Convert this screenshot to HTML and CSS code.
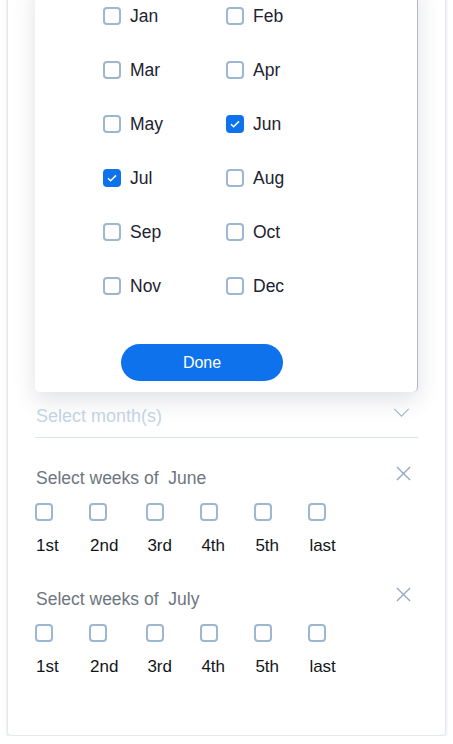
FILE: index.html
```html
<!DOCTYPE html>
<html lang="en">
<head>
    <meta charset="UTF-8">
    <meta name="viewport" content="width=device-width, initial-scale=1.0">
    <title>Recurrence</title>
    <link rel="stylesheet" href="styles.css">
</head>
<body>
<div class="card">
    <div class="month-field">
        <div class="month-popup">
            <div class="month-grid">
                <label class="check"><span class="box"></span>Jan</label>
                <label class="check"><span class="box"></span>Feb</label>
                <label class="check"><span class="box"></span>Mar</label>
                <label class="check"><span class="box"></span>Apr</label>
                <label class="check"><span class="box"></span>May</label>
                <label class="check"><span class="box checked"><svg viewBox="0 0 18 18"><path d="M5 9.2l2.6 2.6L13 6.4"/></svg></span>Jun</label>
                <label class="check"><span class="box checked"><svg viewBox="0 0 18 18"><path d="M5 9.2l2.6 2.6L13 6.4"/></svg></span>Jul</label>
                <label class="check"><span class="box"></span>Aug</label>
                <label class="check"><span class="box"></span>Sep</label>
                <label class="check"><span class="box"></span>Oct</label>
                <label class="check"><span class="box"></span>Nov</label>
                <label class="check"><span class="box"></span>Dec</label>
            </div>
            <button class="done-btn" type="button">Done</button>
        </div>
        <span class="placeholder">Select month(s)</span>
        <svg class="chevron" viewBox="0 0 18 10"><path d="M1 1l8 8 8-8"/></svg>
    </div>

    <div class="weeks">
        <div class="weeks-head">
            <span class="weeks-title">Select weeks of &nbsp;June</span>
            <svg class="close" viewBox="0 0 16 16"><path d="M1 1l14 14M15 1L1 15"/></svg>
        </div>
        <div class="week-row">
            <div class="week"><span class="box"></span><span>1st</span></div>
            <div class="week"><span class="box"></span><span>2nd</span></div>
            <div class="week"><span class="box"></span><span>3rd</span></div>
            <div class="week"><span class="box"></span><span>4th</span></div>
            <div class="week"><span class="box"></span><span>5th</span></div>
            <div class="week"><span class="box"></span><span>last</span></div>
        </div>
    </div>

    <div class="weeks">
        <div class="weeks-head">
            <span class="weeks-title">Select weeks of &nbsp;July</span>
            <svg class="close" viewBox="0 0 16 16"><path d="M1 1l14 14M15 1L1 15"/></svg>
        </div>
        <div class="week-row">
            <div class="week"><span class="box"></span><span>1st</span></div>
            <div class="week"><span class="box"></span><span>2nd</span></div>
            <div class="week"><span class="box"></span><span>3rd</span></div>
            <div class="week"><span class="box"></span><span>4th</span></div>
            <div class="week"><span class="box"></span><span>5th</span></div>
            <div class="week"><span class="box"></span><span>last</span></div>
        </div>
    </div>
</div>
</body>
</html>
```

FILE: styles.css
```css
body {
    font-family: "Liberation Sans", Arial, sans-serif;
    background-color: #fff;
    margin: 0;
    padding: 0;
    color: #232333;
    overflow: hidden;
}

.card {
    margin: -40px 7px 0;
    height: 776px;
    box-sizing: border-box;
    padding: 434px 27px 0;
    border: 1px solid #e3e8ef;
    border-radius: 4px;
    box-shadow: 0 2px 3px rgba(170, 185, 210, 0.45);
}

/* month dropdown */
.month-field {
    position: relative;
    height: 42px;
    display: flex;
    align-items: center;
    justify-content: space-between;
    border-bottom: 1px solid #d9e3ef;
}

.placeholder {
    font-size: 18px;
    color: #c5d5e7;
    padding-left: 1px;
}

.chevron {
    width: 17px;
    height: 9px;
    margin-right: 8px;
    margin-top: -8px;
    fill: none;
    stroke: #a3b8d3;
    stroke-width: 1.3;
}

.month-popup {
    position: absolute;
    left: 0;
    right: 0;
    bottom: calc(100% + 3px);
    background-color: #fff;
    border-right: 1px solid #b0b6c4;
    border-radius: 0 0 5px 5px;
    box-shadow: 0 8px 22px rgba(60, 70, 95, 0.16);
    padding: 24px 0 11px;
    z-index: 2;
}

.month-grid {
    display: grid;
    grid-template-columns: 123px 123px;
    row-gap: 36px;
    padding-left: 68px;
}

.check {
    display: flex;
    align-items: center;
    height: 18px;
    font-size: 17.5px;
    gap: 9px;
    color: #222230;
}

.box {
    display: inline-block;
    width: 18px;
    height: 18px;
    box-sizing: border-box;
    border: 2px solid #9db6d2;
    border-radius: 4px;
    flex-shrink: 0;
}

.box.checked {
    background-color: #0e72ed;
    border-color: #0e72ed;
}

.box svg {
    display: block;
    width: 18px;
    height: 18px;
    margin: -2px;
    fill: none;
    stroke: #fff;
    stroke-width: 1.5;
}

.done-btn {
    display: block;
    margin: 49px 0 0 86px;
    width: 162px;
    height: 37px;
    border: none;
    border-radius: 19px;
    background-color: #0e72ed;
    color: #fff;
    font-family: inherit;
    font-size: 16px;
}

/* weeks */
.weeks {
    margin-top: 29px;
}

.weeks + .weeks {
    margin-top: 32px;
}

.weeks-head {
    display: flex;
    justify-content: space-between;
    align-items: flex-start;
}

.weeks-title {
    font-size: 17.5px;
    line-height: 22px;
    color: #6e7681;
    padding-left: 1px;
}

.close {
    width: 15px;
    height: 15px;
    margin: -1px 7px 0 0;
    fill: none;
    stroke: #93a6bf;
    stroke-width: 1.4;
}

.week-row {
    display: flex;
    margin-top: 14px;
}

.week {
    display: flex;
    flex-direction: column;
    align-items: flex-start;
    gap: 15px;
    min-width: 54px;
    padding-right: 28px;
    box-sizing: border-box;
    font-size: 17px;
    line-height: 20px;
    color: #131619;
}

.week span:last-child {
    padding-left: 1px;
}
```
